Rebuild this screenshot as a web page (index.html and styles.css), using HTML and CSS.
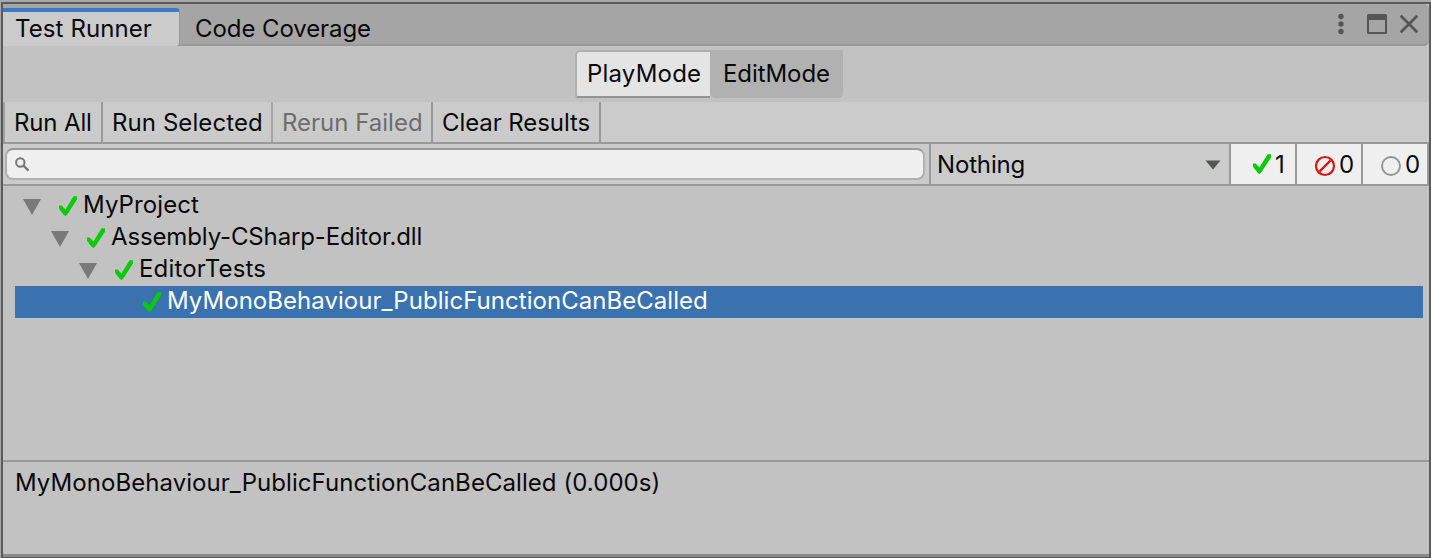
FILE: index.html
```html
<!DOCTYPE html>
<html lang="en">
<head>
<meta charset="utf-8">
<title>Test Runner</title>
<link rel="stylesheet" href="styles.css">
</head>
<body>
<svg class="defs" aria-hidden="true">
  <symbol id="check" viewBox="0 0 20 20"><path d="M1 9.400H3.600L7.400 13.600 15.600.2H19V3.600L9.600 18 7.600 20 5.800 19 1 12.800Z" fill="#06cc06"/></symbol>
</svg>
<div class="window">
  <header class="tabs">
    <div class="tab active"><span class="t-runner">Test Runner</span></div>
    <div class="tab"><span class="t-coverage">Code Coverage</span></div>
    <div class="controls">
      <svg width="96" height="40" viewBox="0 0 96 40">
        <g fill="#555">
          <circle cx="12" cy="12.500" r="2.700"/><circle cx="12" cy="20" r="2.700"/><circle cx="12" cy="27.500" r="2.700"/>
          <path fill-rule="evenodd" d="M39.500 10H56.500Q58 10 58 11.500V28.500Q58 30 56.500 30H39.500Q38 30 38 28.500V11.500Q38 10 39.500 10ZM40 16V28H56V16Z"/>
        </g>
        <path d="M72.500 12.500 87.500 27.500M87.500 12.500 72.500 27.500" stroke="#555" stroke-width="2.800" stroke-linecap="round"/>
      </svg>
    </div>
  </header>
  <div class="modes">
    <button class="mode play"><span class="t-play">PlayMode</span></button>
    <button class="mode edit"><span class="t-edit">EditMode</span></button>
  </div>
  <nav class="toolbar">
    <button class="tool w-all"><span class="t-all">Run All</span></button>
    <button class="tool w-selected"><span class="t-selected">Run Selected</span></button>
    <button class="tool w-failed disabled"><span class="t-failed">Rerun Failed</span></button>
    <button class="tool w-clear"><span class="t-clear">Clear Results</span></button>
  </nav>
  <div class="filters">
    <div class="search">
      <svg width="20" height="20" viewBox="0 0 20 20" fill="none" stroke="#777"><circle cx="6.300" cy="7.500" r="4.200" stroke-width="2"/><path d="M9.300 10.500 14.500 15.700" stroke-width="2.400"/></svg>
    </div>
    <div class="select"><span class="t-nothing">Nothing</span>
      <svg width="16" height="10" viewBox="0 0 16 10"><path d="M0.500 0.500H15.500L8 9.500Z" fill="#55594f"/></svg>
    </div>
    <div class="count"><svg width="20" height="20"><use href="#check"/></svg><span>1</span></div>
    <div class="count"><svg class="ring" width="22" height="22" viewBox="0 0 22 22" fill="none" stroke="#d91414"><circle cx="11" cy="11" r="9" stroke-width="2.200"/><path d="M5.500 16.500 16.500 5.500" stroke-width="2.400"/></svg><span>0</span></div>
    <div class="count last"><svg class="ring" width="22" height="22" viewBox="0 0 22 22" fill="none" stroke="#949494"><circle cx="11" cy="11" r="9" stroke-width="1.900"/></svg><span>0</span></div>
  </div>
  <main class="tree">
    <div class="row"><i class="fold"></i><svg class="check" width="20" height="20"><use href="#check"/></svg><span class="t-project">MyProject</span></div>
    <div class="row level1"><i class="fold"></i><svg class="check" width="20" height="20"><use href="#check"/></svg><span class="t-assembly">Assembly-CSharp-Editor.dll</span></div>
    <div class="row level2"><i class="fold"></i><svg class="check" width="20" height="20"><use href="#check"/></svg><span class="t-tests">EditorTests</span></div>
    <div class="row level3 selected"><svg class="check" width="20" height="20"><use href="#check"/></svg><span class="t-method">MyMonoBehaviour_PublicFunctionCanBeCalled</span></div>
  </main>
  <section class="details"><span class="t-details">MyMonoBehaviour_PublicFunctionCanBeCalled (0.000s)</span></section>
</div>
</body>
</html>
```
FILE: styles.css
```css
* { box-sizing: border-box; }
body {
  margin: 0;
  padding: 2px 0 0 1px;
  width: 1431px;
  height: 558px;
  overflow: hidden;
  background: #a8a8a8;
  color: #090909;
  font: 400 24px/30px Inter, sans-serif;
}
.defs { display: none; }
svg { display: block; flex: none; }
span { white-space: nowrap; }
button { font: inherit; color: inherit; border: 0; padding: 0; text-align: left; }
.window {
  width: 1430px;
  height: 556px;
  border: 2px solid #5a5a5a;
  border-bottom-width: 1px;
  background: #c2c2c2;
  display: flex;
  flex-direction: column;
}
.tabs {
  height: 42px;
  display: flex;
  background: #a5a5a5;
  border-bottom: 2px solid #999;
  border-radius: 0 5px 5px 0;
}
.tab { height: 36px; margin-top: 4px; padding: 6px 0 0 15px; }
.tab.active {
  width: 177px;
  height: 38px;
  padding: 2px 0 0 12px;
  background: #cbcbcb;
  border-top: 4px solid #3a79c8;
  border-right: 1px solid #999;
  border-radius: 0 4px 4px 0;
}
.controls { margin-left: auto; width: 100px; }
.modes { height: 56px; display: flex; padding: 4px 0 0 572px; }
.mode { height: 48px; }
.play {
  width: 135px;
  padding: 0 0 0 10px;
  background: #e4e4e4;
  border: 2px solid #b0b0b0;
  border-right: 0;
  border-bottom-color: #949494;
  border-radius: 5px 0 0 3px;
}
.edit { width: 133px; padding: 0 0 1px 13px; background: #b1b1b1; border-radius: 0 0 5px 5px; }
.toolbar {
  height: 42px;
  display: flex;
  padding-left: 2px;
  box-shadow: inset 2px 0 #a1a1a1;
  background: #cbcbcb;
  border-bottom: 2px solid #999;
}
.tool { height: 40px; padding: 2px 0 0 9px; background: none; border-right: 2px solid #999; }
.w-all { width: 98px; }
.w-selected { width: 170px; border-right-color: #a5a5a5; }
.w-failed { width: 160px; }
.w-clear { width: 168px; }
.disabled { color: #6d6d6d; }
.filters { height: 42px; display: flex; background: #cbcbcb; border-bottom: 2px solid #999; }
.search {
  width: 920px;
  height: 32px;
  margin: 4px 4px 0 2px;
  padding: 5px 0 0 7px;
  border: 2px solid #b0b0b0;
  border-top-color: #999;
  border-radius: 8px;
  background: #f0f0f0;
}
.select {
  width: 300px;
  display: flex;
  align-items: center;
  justify-content: space-between;
  padding: 1px 8px 0 6px;
  border-left: 2px solid #999;
}
.select span, .count span { padding-top: 1px; }
.count {
  width: 66px;
  display: flex;
  align-items: center;
  padding-left: 21px;
  gap: 3px;
  background: #efefef;
  border-left: 2px solid #999;
}
.count .ring { margin: 3px 0 0 -4px; }
.count.last { width: 68px; border-right: 2px solid #999; }
.tree { height: 276px; padding: 4px 6px 0 12px; border-bottom: 2px solid #999; }
.row { height: 32px; display: flex; align-items: flex-start; padding-left: 8px; }
.fold {
  flex: none;
  width: 18px;
  height: 16px;
  margin: 9px 17px 0 0;
  background: #797979;
  clip-path: polygon(0 0, 100% 0, 50% 100%);
}
.check { margin: 6px 5px 0 0; }
.level1 { padding-left: 36px; }
.level2 { padding-left: 64px; }
.level3 { padding-left: 127px; }
.selected { background: #3a72b0; color: #fff; }
.details { flex: 1; padding: 6px 12px 0; border-bottom: 3px solid #8a8a8a; }

/* Tracking per label */
.t-runner, .t-project { letter-spacing: .1px; }
.t-coverage, .t-edit, .t-clear { letter-spacing: -.08px; }
.t-play { letter-spacing: .2px; }
.t-all, .t-nothing { letter-spacing: -.15px; }
.t-selected { letter-spacing: .08px; }
.t-assembly { letter-spacing: -.13px; }
.t-tests { letter-spacing: .18px; }
.t-method { letter-spacing: .04px; }
.t-details { letter-spacing: .06px; }
```
